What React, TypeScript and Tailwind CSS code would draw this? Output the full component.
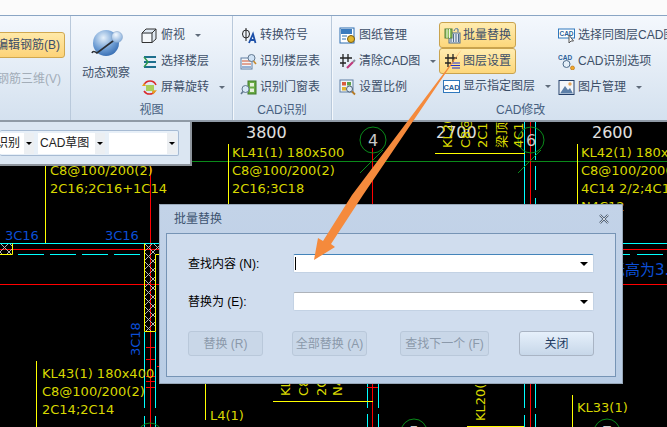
import React from "react";

const Arrow = () => <span className="ml-[7px] w-0 h-0 border-x-[3px] border-x-transparent border-t-[3px] border-t-[#5f6b7a] shrink-0" />;

const I = ({ children }: { children: React.ReactNode }) => (
  <svg width="17" height="17" viewBox="0 0 17 17" className="shrink-0" fill="none">{children}</svg>
);

const icons: Record<string, React.ReactNode> = {
  top: <I><path d="M1 6 L5 2 H15 V12 L11 15.500 H1 Z" fill="#dfe9f3" stroke="#333" /><path d="M1 6 H11 V15.500 M11 6 L15 2" stroke="#333" /><path d="M2 7 H10 V15 H2 Z" fill="#f5f8fb" /></I>,
  floor: <I><path d="M3 4 H15 M3 9 H15 M3 14 H15" stroke="#1e6f8e" strokeWidth="2" /><path d="M3 4 L7 9 L3 14" stroke="#2f9b4f" strokeWidth="1.500" /></I>,
  rotate: <I><path d="M3 6 A6.500 6.500 0 0 1 15 6" stroke="#d92b2b" strokeWidth="1.500" /><path d="M14 12 A6.500 6.500 0 0 1 3 12" stroke="#d92b2b" strokeWidth="1.500" /><rect x="5" y="6" width="8" height="6" fill="#a9cf5a" /><path d="M1 7 L5 7 L3 4 Z M12 15.500 L16 11 L11 12 Z" fill="#e8a020" /></I>,
  symbol: <I><ellipse cx="6" cy="7" rx="3.500" ry="4" stroke="#222" /><path d="M6 1 V14" stroke="#222" /><path d="M9 16 L13 7 L15.500 16 M10.500 13 H15" stroke="#1c4fa8" strokeWidth="1.800" /></I>,
  floorTable: <I><rect x="1" y="5" width="11" height="11" fill="#f2f5f9" stroke="#5f7ea3" /><path d="M2 8 H11 M2 11 H11" stroke="#d0522e" /><path d="M2 14 H11" stroke="#3a6fb0" /><circle cx="11.500" cy="5" r="3.500" fill="#cfe2f5" stroke="#62788f" /><path d="M13.500 8 L16 11" stroke="#c78a2c" strokeWidth="1.600" /></I>,
  doorTable: <I><rect x="8" y="2" width="8" height="13" fill="#6aab45" stroke="#3f7a2a" /><rect x="10" y="4" width="4" height="3.500" fill="#e4f0da" /><rect x="10" y="9.500" width="4" height="3.500" fill="#e4f0da" /><circle cx="5.500" cy="10" r="3.500" fill="#d8e8f6" stroke="#62788f" /><path d="M3 12.500 L1 15" stroke="#62788f" strokeWidth="1.600" /></I>,
  drawing: <I><rect x="1" y="1" width="14" height="15" fill="#fff" stroke="#2b6cb0" /><rect x="2" y="2" width="11" height="5" fill="#3a7bbf" /><path d="M3 9 H8 M3 12 H7" stroke="#2b6cb0" /><circle cx="12" cy="12" r="3.500" fill="#e3b62c" stroke="#7a5c10" /></I>,
  clear: <I><path d="M4 1 V14 M9 1 V9 M1 5 H13 M1 10 H7" stroke="#222" strokeWidth="1.300" /><path d="M8 15 L14 9" stroke="#c0397c" strokeWidth="2.200" /><path d="M14 9 L16 7" stroke="#8a8f9a" strokeWidth="2" /></I>,
  scale: <I><rect x="1" y="1" width="13" height="12" fill="#eef3f8" stroke="#5f7ea3" /><rect x="3" y="3" width="4" height="3.500" fill="#d95a3c" /><rect x="8" y="3" width="4" height="3.500" fill="#5ba04a" /><rect x="3" y="8" width="4" height="3.500" fill="#e0b22f" /><circle cx="10.500" cy="10" r="3" fill="#dbe9f6" stroke="#4d5f73" /><path d="M13 12.500 L16 15.500" stroke="#b67a24" strokeWidth="1.800" /></I>,
  batch: <I><rect x="5" y="6" width="11" height="10" fill="#dfe6ee" stroke="#4f6d8c" /><path d="M7 7 V15 M9.500 7 V15 M12 7 V15 M14.500 7 V15" stroke="#4f6d8c" /><rect x="1" y="2" width="7" height="9" fill="#8dbf5c" stroke="#55803a" /><path d="M3 2 V11 M5.500 2 V11" stroke="#eef5e6" /><path d="M10 4 A3 3 0 0 1 14 2 L14 5" stroke="#3b6ea8" /></I>,
  layer: <I><path d="M4 1 V14 M9 1 V9 M1 5 H13 M1 10 H7" stroke="#222" strokeWidth="1.300" /><path d="M8 10 H16 M6 12.500 H16 M8 15 H16" stroke="#1b2fd0" strokeWidth="1.100" /></I>,
  cad: <I><rect x="0.500" y="2.500" width="16" height="12" fill="#fff" stroke="#2f78bd" /><text x="8.500" y="11.500" textAnchor="middle" fontSize="7.500" fontWeight="700" fontFamily="Liberation Sans" fill="#2a5f9a">CAD</text></I>,
  sameLayer: <I><rect x="0.500" y="2" width="16" height="9" fill="#fff" stroke="#2f78bd" /><text x="8.500" y="9" textAnchor="middle" fontSize="6.500" fontWeight="700" fontFamily="Liberation Sans" fill="#2a5f9a">CAD</text><path d="M11 8 V16 L13 14 L15.500 14 Z" fill="#fff" stroke="#555" /></I>,
  cadOptions: <I><text x="0" y="7" fontSize="6.500" fontWeight="700" fontFamily="Liberation Sans" fill="#2a5f9a">CAD</text><circle cx="8.500" cy="11" r="3.500" fill="#e3eef8" stroke="#4d6b8a" /><circle cx="14.500" cy="15" r="2" fill="#f2a92b" stroke="#b06a10" strokeWidth="0.600" /></I>,
  image: <I><rect x="1" y="1.500" width="15" height="14" fill="#f3f6fa" stroke="#24406b" /><path d="M2 14.500 L7 7 L10 11 L12 9 L15 14.500 Z" fill="#5c7fa8" /><circle cx="12" cy="5" r="1.700" fill="#e5a55b" /></I>,
};

function Item({ icon, text, arrow }: { icon: string; text: string; arrow?: boolean }) {
  return (
    <div className="h-[26px] flex items-center gap-[3px] whitespace-nowrap">
      {icons[icon]}
      <span>{text}</span>
      {arrow && <Arrow />}
    </div>
  );
}

function Hot({ icon, text }: { icon: string; text: string }) {
  return (
    <div className="h-[26px] w-[77px] pl-[4px] flex items-center gap-[2px] whitespace-nowrap rounded-[3px] border border-[#c9a34e] bg-gradient-to-b from-[#ffecb0] to-[#fdd77a]">
      {icons[icon]}
      <span>{text}</span>
    </div>
  );
}

function Group({ label, width, children }: { label: string; width: string; children: React.ReactNode }) {
  return (
    <div className={`${width} shrink-0 flex flex-col border-r border-[#b9c9db] shadow-[1px_0_0_#f4f8fc]`}>
      <div className="h-[86px] flex pt-[6px]">{children}</div>
      <div className="h-[16px] leading-[16px] text-center text-[#46607f]">{label}</div>
    </div>
  );
}

function Combo({ w, text }: { w: string; text: string }) {
  return (
    <div className={`${w} shrink-0 h-[21px] bg-white flex items-center justify-between whitespace-nowrap`}>
      <span className="text-[12px] text-[#222] pl-[2px]">{text}</span>
      <span className="w-[10px] h-full bg-[#eceff2] flex items-center justify-center">
        <span className="w-0 h-0 border-x-[3px] border-x-transparent border-t-[3px] border-t-black" />
      </span>
    </div>
  );
}

function Field({ label, focused }: { label: string; focused?: boolean }) {
  return (
    <div className="flex items-center h-[19px]">
      <div className="w-[105px] text-[12px] text-black shrink-0 whitespace-nowrap">{label}</div>
      <div className={`w-[301px] h-[19px] bg-white rounded-[2px] border border-[#c3d2e4] flex items-center justify-between pl-[1px] pr-[5px] ${focused ? "border-t-[#4484ba]" : "border-t-[#aeb3ba]"}`}>
        {focused ? <span className="w-px h-[13px] bg-black" /> : <span />}
        <span className="w-0 h-0 border-x-[4px] border-x-transparent border-t-[4px] border-t-black" />
      </div>
    </div>
  );
}

function Btn({ text, w, on }: { text: string; w: string; on?: boolean }) {
  return (
    <div className={`${w} h-[25px] rounded-[3px] border flex items-center justify-center whitespace-nowrap text-[12px] ${on ? "border-[#a9b4c4] bg-gradient-to-b from-[#e6f0fb] to-[#c7d7e9] text-[#1d3a60]" : "border-[#b9c8da] bg-[#c9d7e8] text-[#8b99aa]"}`}>
      {text}
    </div>
  );
}

const Y = "#d8d800";
const B = "#0b4fd6";
const C = "#00ffff";
const R = "#ff0000";
const YL = "#ffff00";
const G = "#0a8a1a";

function Drawing() {
  const yellowText: [number, number, string][] = [
    [232, 157, "KL41(1) 180x500"], [232, 175, "C8@100/200(2)"], [232, 193, "2C16;3C18"],
    [581, 157, "KL42(1) 180x500"], [581, 175, "C8@100/200(2)"], [581, 193, "4C14 2/2;4C14"], [581, 211, "N4C12"],
    [50, 175, "C8@100/200(2)"], [50, 193, "2C16;2C16+1C14"],
    [42, 378, "KL43(1) 180x400"], [42, 396, "C8@100/200(2)"], [42, 414, "2C14;2C14"],
    [210, 420, "L4(1)"], [577, 412, "KL33(1)"],
  ];
  const rot: [number, number, string][] = [
    [452, 148, "KL2(1)"], [470, 148, "C8@100"], [487, 148, "2C14"], [506, 148, "梁顶标高"], [523, 148, "4C14"],
    [290, 396, "KL1(1)"], [308, 396, "C8@100"], [326, 396, "2C14"], [342, 396, "N4C12"],
    [485, 421, "KL20(1)"],
  ];
  const ticks = [347, 359, 376, 381, 387];
  return (
    <svg viewBox="0 122 667 305" className="block w-full h-full" fontFamily="'DejaVu Sans','Noto Sans CJK SC',sans-serif" fontSize="13">
      <defs>
        <pattern id="hatch" width="9" height="9" patternUnits="userSpaceOnUse">
          <path d="M0 0 L9 9 M9 0 L0 9" stroke="#b5b5b5" strokeWidth="1" />
        </pattern>
      </defs>
      <path d="M192 161.500 H667" stroke={G} />
      <path d="M372.500 148 V204 M530.500 122 V204 M622 249.500 H667 M622 284.500 H667 M0 249.500 H159 M0 284.500 H159 M150.500 160 V427 M372.500 383 V427 M530.500 383 V427" stroke={R} />
      <path d="M524.500 122 V204 M535.500 122 V160 M535.500 166 V190 M535.500 198 V204 M0 243.500 H159 M622 243.500 H667 M524.500 383 V408 M524.500 415 V427 M535.500 383 V408 M535.500 414 V427 M367.500 383 V408 M367.500 414 V427 M378.500 383 V408 M378.500 414 V427 M144.500 332 V408 M144.500 416 V427 M155.500 332 V408 M155.500 416 V427" stroke={C} />
      <path d="M18 254.500 H44 M50 254.500 H76 M82 254.500 H108 M114 254.500 H140 M622 254.500 H630 M637 254.500 H663" stroke={C} />
      {ticks.map((t) => <path key={t} d={`M146 ${t + 0.5} H155`} stroke={R} />)}
      <path d="M367 387.500 H378 M157 366.500 H159" stroke={R} />
      <rect x="0" y="244" width="12.500" height="11" fill="url(#hatch)" />
      <rect x="145" y="244" width="14" height="10" fill="url(#hatch)" />
      <rect x="145" y="254" width="10" height="77" fill="url(#hatch)" />
      <path d="M0 254.500 H12.500 V243.500 M144.500 243.500 V331.500 H155.500 V254.500 H159" stroke={YL} fill="none" />
      <path d="M228.500 144 V204 M45.500 160 V243 M577.500 144 V204 M36.500 361 V427 M205.500 384 V420 M572.500 395 V427 M435 153.500 H525 M273 401.500 H373 M467 426.500 H524" stroke={YL} />
      {[[373, 140, "4"], [531, 140, "6"], [414, 432, "5"], [607, 432, "7"], [150, 436, "3"]].map(([x, y, t]) => (
        <g key={String(t)}>
          <circle cx={x as number} cy={y as number} r="13" fill="none" stroke={G} />
          <text x={x as number} y={(y as number) + 6} textAnchor="middle" fontSize="16" fill="#c8c8c8">{t}</text>
        </g>
      ))}
      <path d="M360 173 L383 150 M518 173 L541 150" stroke={G} />
      {[[246, "3800"], [436, "2700"], [592, "2600"]].map(([x, t]) => (
        <text key={String(t)} x={x as number} y="138" fontSize="16" fill="#e0e0e0">{t}</text>
      ))}
      {rot.map(([x, y, t]) => <text key={`${x}-${y}`} x={x} y={y} fill={Y} transform={`rotate(-90 ${x} ${y})`}>{t}</text>)}
      {yellowText.map(([x, y, t]) => <text key={`${x}-${y}`} x={x} y={y} fill={Y}>{t}</text>)}
      <text x="5" y="240" fill={B}>3C16</text>
      <text x="105" y="240" fill={B}>3C16</text>
      <text x="140" y="356" fill={B} transform="rotate(-90 140 356)">3C18</text>
      <text x="610" y="275" fontSize="15" fill={B}>标高为3.4</text>
    </svg>
  );
}

export default function App() {
  return (
    <div className="relative w-[667px] h-[427px] overflow-hidden flex flex-col bg-black text-[12px] leading-[16px] text-[#3d4f68] font-['Liberation_Sans','Noto_Sans_CJK_SC',sans-serif]">
      <div className="h-[16px] shrink-0 bg-[#fbfbfb] border-b border-[#8aa5c4]" />
      <div className="h-[106px] shrink-0 flex bg-gradient-to-b from-[#f4f8fd] to-[#d4e1ef] border-b-[2px] border-[#8f9aa6]">
        <div className="w-[71px] shrink-0 flex flex-col items-end pr-[5px] pt-[16px] overflow-hidden border-r border-[#b9c9db]">
          <div className="h-[26px] flex items-center pl-[3px] pr-[4px] rounded-[3px] border border-[#d0a850] bg-gradient-to-b from-[#ffe9a8] to-[#fdd378] whitespace-nowrap shrink-0">
            编辑钢筋(B)
          </div>
          <div className="mt-[13px] pr-[4px] whitespace-nowrap text-[#a3adb8]">钢筋三维(V)</div>
        </div>

        <Group label="视图" width="w-[162px]">
          <div className="w-[48px] ml-[11px] flex flex-col items-center whitespace-nowrap shrink-0">
            <svg width="34" height="30" viewBox="0 0 34 30" className="mt-[7px] ml-[3px]">
              <defs>
                <radialGradient id="g1" cx="0.400" cy="0.300" r="0.800"><stop offset="0" stopColor="#e6f1fb" /><stop offset="0.550" stopColor="#6f9ed4" /><stop offset="1" stopColor="#2a62ab" /></radialGradient>
                <radialGradient id="g2" cx="0.400" cy="0.300" r="0.800"><stop offset="0" stopColor="#f4f9fe" /><stop offset="1" stopColor="#7aa6d8" /></radialGradient>
              </defs>
              <circle cx="15" cy="14" r="13" fill="url(#g1)" />
              <path d="M1 24 Q2 21 6 24 L26 9" stroke="#2b2f36" strokeWidth="1.600" fill="none" />
              <circle cx="26" cy="8" r="5.500" fill="url(#g2)" stroke="#7c9cc2" strokeWidth="0.500" />
            </svg>
            <div className="mt-[6px]">动态观察</div>
          </div>
          <div className="ml-[11px] flex flex-col">
            <Item icon="top" text="俯视" arrow />
            <Item icon="floor" text="选择楼层" />
            <Item icon="rotate" text="屏幕旋转" arrow />
          </div>
        </Group>

        <Group label="CAD识别" width="w-[99px]">
          <div className="pl-[7px] flex flex-col">
            <Item icon="symbol" text="转换符号" />
            <Item icon="floorTable" text="识别楼层表" />
            <Item icon="doorTable" text="识别门窗表" />
          </div>
        </Group>

        <div className="flex-1 min-w-0 flex flex-col overflow-hidden">
          <div className="h-[86px] flex pt-[6px]">
            <div className="w-[107px] pl-[7px] shrink-0 flex flex-col">
              <Item icon="drawing" text="图纸管理" />
              <Item icon="clear" text="清除CAD图" arrow />
              <Item icon="scale" text="设置比例" />
            </div>
            <div className="w-[120px] shrink-0 flex flex-col">
              <Hot icon="batch" text="批量替换" />
              <Hot icon="layer" text="图层设置" />
              <div className="pl-[4px] -mt-[1px]"><Item icon="cad" text="显示指定图层" arrow /></div>
            </div>
            <div className="flex flex-col -ml-px">
              <Item icon="sameLayer" text="选择同图层CAD图元" />
              <Item icon="cadOptions" text="CAD识别选项" />
              <Item icon="image" text="图片管理" arrow />
            </div>
          </div>
          <div className="h-[16px] leading-[16px] text-[#46607f] pl-[164px]">CAD修改</div>
        </div>
      </div>

      <div className="flex-1 min-h-0">
        <Drawing />
      </div>

      <div className="absolute left-0 top-[122px] w-[192px] h-[44px] bg-[#dbe6f2] border-r-[2px] border-b-[2px] border-[#8d949c] pr-[11px] pt-[8px] pb-[8px]">
        <div className="h-full border border-l-0 border-[#a7bbd3] rounded-[2px] bg-[#e8f0f8] flex items-center justify-end gap-[4px] pr-[1px] overflow-hidden">
          <Combo w="w-[40px]" text="识别" />
          <Combo w="w-[67px]" text="CAD草图" />
          <Combo w="w-[68px]" text="" />
        </div>
      </div>

      <div className="absolute left-[159px] top-[204px] w-[464px] h-[180px] border border-[#97a7b8] bg-gradient-to-b from-[#c3d3e8] to-[#b9cde5] px-[6px] pb-[6px] flex flex-col">
        <div className="h-[28px] shrink-0 flex items-center justify-between pl-[8px] pr-[6px] text-[#3d5370]">
          <span>批量替换</span>
          <svg width="12" height="10" viewBox="0 0 12 10"><path d="M2 1 L10 9 M10 1 L2 9" stroke="#4c5c70" strokeWidth="2.200" /><path d="M2 1 L10 9 M10 1 L2 9" stroke="#f4f7fb" strokeWidth="0.800" /></svg>
        </div>
        <div className="flex-1 border border-[#7694b5] bg-[#d0ddee] pl-[21px] pr-[21px] pt-[20px] flex flex-col">
          <Field label="查找内容 (N):" focused />
          <div className="mt-[19px]"><Field label="替换为 (E):" /></div>
          <div className="mt-[20px] flex">
            <Btn text="替换 (R)" w="w-[75px]" />
            <div className="w-[29px]" />
            <Btn text="全部替换 (A)" w="w-[75px]" />
            <div className="w-[33px]" />
            <Btn text="查找下一个 (F)" w="w-[89px]" />
            <div className="w-[30px]" />
            <Btn text="关闭" w="w-[75px]" on />
          </div>
        </div>
      </div>

      <svg className="absolute inset-0 pointer-events-none" width="667" height="427" viewBox="0 0 667 427">
        <path d="M462 49 L363 195 L331 244 L335 247 L314 260 L318 238 L323 241 L352 195 Z" fill="#f58a3c" />
      </svg>
    </div>
  );
}
